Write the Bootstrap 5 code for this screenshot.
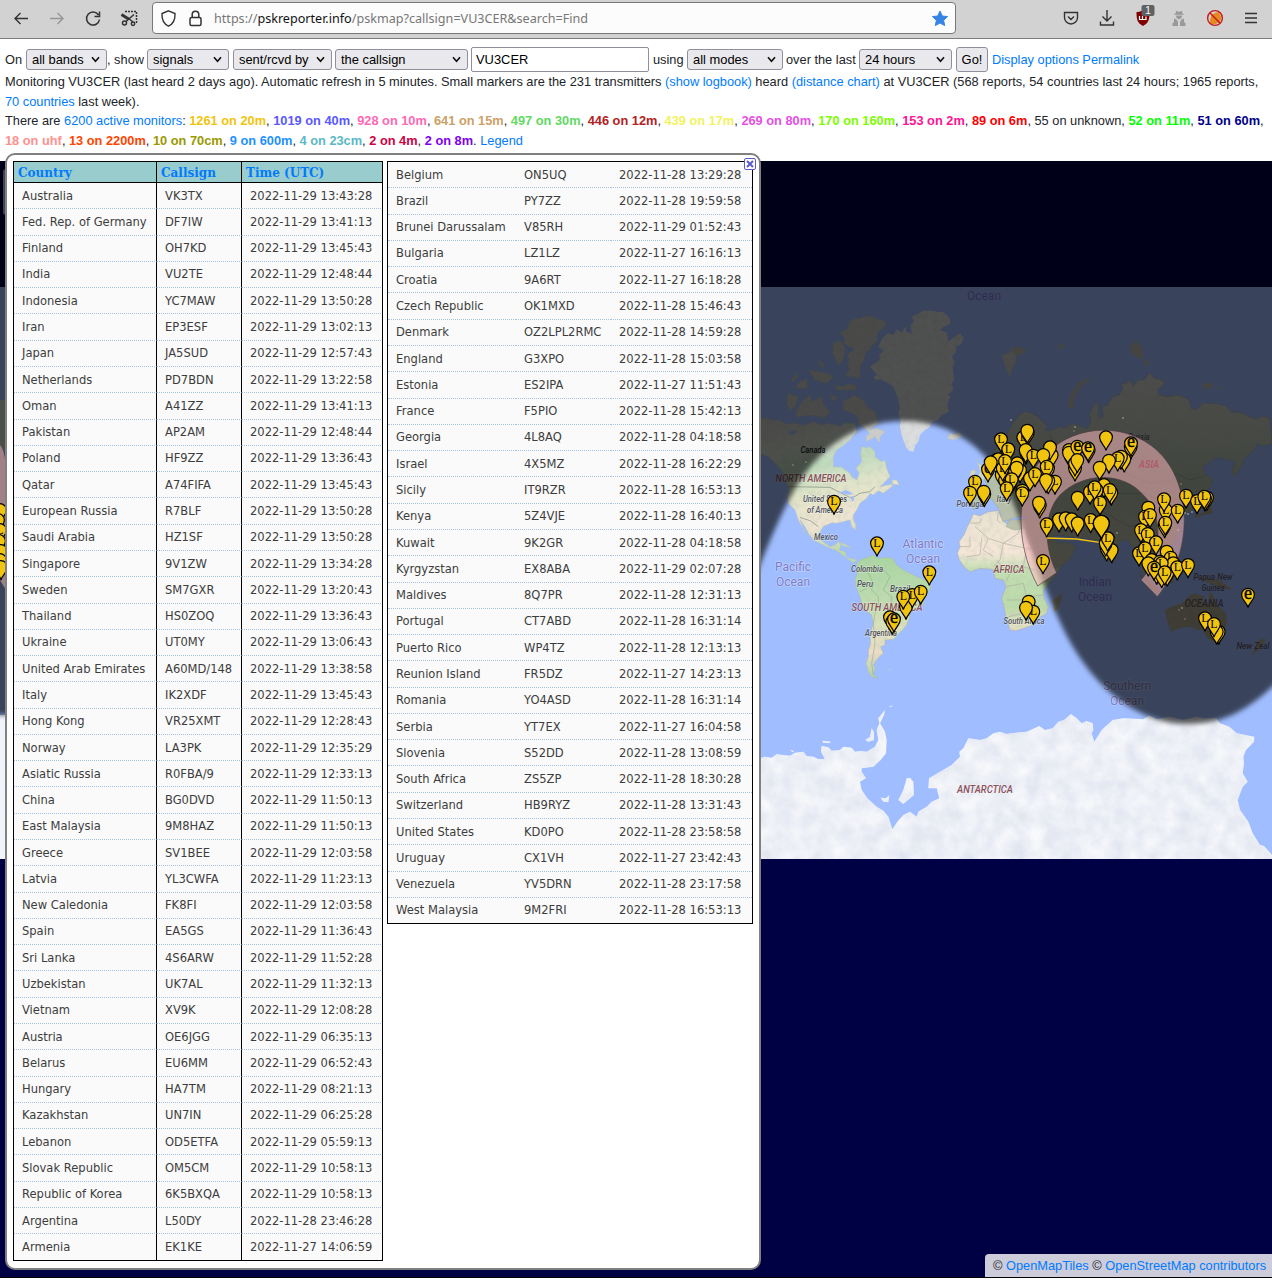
<!DOCTYPE html>
<html lang="en">
<head>
<meta charset="utf-8">
<meta name="viewport" content="width=device-width, initial-scale=1">
<title>PSK Reporter - Display Reception Reports</title>
<link rel="stylesheet" href="https://cdn.jsdelivr.net/npm/bootstrap@5.3.0/dist/css/bootstrap.min.css">
<style>
body{font-family:"Liberation Sans",Arial,sans-serif;font-size:12.8px;line-height:19.5px;color:#212529;background:#fff;overflow:hidden}
a{color:#007bff;text-decoration:none}
.browser-bar{height:39px;background:#d2d2d2;border-bottom:1px solid #7c7c7c;padding:0 12px 2px 12px}
.tool-icon{width:18px;height:18px;flex:none}
.gap-tool{margin-left:18px}
.gap-inner{margin-left:9px}
.gap-field{margin-left:4px}
.address{width:804px;height:32px;background:#fcfcfc;border:1px solid #777;border-radius:4px;padding:1px 7px 0;font-family:"Noto Sans",sans-serif;font-size:12.6px;color:#777;margin-left:14px}
.address b{font-weight:400;color:#111}
.filters{height:33px;padding:8px 5px 0;white-space:pre}
.filters .form-select{font-size:12.9px;line-height:15px;height:21px;padding:0 18px 0 5px;border:1px solid #8f8f9d;border-radius:3px;color:#000;background-color:#e9e9ed;background-image:url("data:image/svg+xml,%3Csvg xmlns='http://www.w3.org/2000/svg' viewBox='0 0 10 10'%3E%3Cpath d='M1.800 3 5 6.600 8.200 3' fill='none' stroke='%23111' stroke-width='1.500'/%3E%3C/svg%3E");background-size:11px;background-position:right 5px center;flex:none}
.filters .form-control{width:178px;height:25px;font-size:12.9px;padding:0 4px;border:1px solid #8f8f9d;border-radius:2px;color:#000;flex:none}
.go-btn{font-size:12.9px;line-height:15px;width:32px;height:25px;padding:0;border:1px solid #8f8f9d;border-radius:3px;background:#e9e9ed;color:#000}
.w-bands{width:81px}.w-sig{width:82px}.w-dir{width:99px}.w-call{width:133px}.w-mode{width:96px}.w-hour{width:93px}
.t-on{width:21px}.t-show{width:40px}.t-using{width:38px;padding-left:4px}.t-over{width:76px;padding-left:3px}
.status{height:89px;padding-left:5px;white-space:nowrap}
.map-area{height:1117px;background:#000045;position:relative;overflow:hidden;border-bottom:1px solid #000}
.map-area>svg{display:block}
.popup-panel{position:absolute;left:5px;top:153px;width:756px;height:1117px;background:#fff;border:2px solid #808080;border-radius:10px;padding:6px 6px 0;gap:4px}
.report{border:1px solid #000;background:#fafafa;font-family:"DejaVu Sans",sans-serif;font-size:11.52px;line-height:16px;color:#3d3d3d;display:block;overflow:hidden}
.report tbody,.report thead{display:block}
.report tr{display:flex;height:26.29px}
.report td{padding:4.6px 0 0 8px;border-bottom:1px dotted #a4c3e4;flex:none}
.report tr:last-child td{border-bottom:0}
.report th{padding:3px 0 0 4px;color:#007bff;font:bold 12px/17px "DejaVu Serif",serif;flex:none}
.report thead tr{height:21px;background:#9cc;border-bottom:1px solid #000}
.rep-a{width:370px;height:1100px}.rep-b{width:366px;height:763px}
.rep-a tr>:nth-child(1){width:143px;border-right:1px solid #000}
.rep-a tr>:nth-child(2){width:85px;border-right:1px solid #000}
.rep-a tr>:nth-child(3){width:141px}
.rep-b tr>:nth-child(1){width:128px}.rep-b tr>:nth-child(2){width:95px}.rep-b tr>:nth-child(3){width:141px}
.close-x{position:absolute;right:3px;top:3px;width:12px;height:12px}
.attrib{position:absolute;right:0;bottom:0;width:287px;height:23px;background:#ccccda;border-radius:4px 0 0 0;padding:2px 0 0 8px;white-space:nowrap;font-size:12.8px}
.map-word{font-family:Roboto,sans-serif;font-style:italic;font-weight:500;font-size:9.5px;fill:#50535c;text-anchor:middle;stroke:#fff;stroke-opacity:.35;stroke-width:1.4px;paint-order:stroke}
.map-land{fill:#8a505a;font-size:11px}
.map-sea{fill:#7d7cc6;font-style:normal;font-size:12px;font-weight:400}
.map-dim{stroke:none;fill:#241f26}.map-dimsea{stroke:none;fill:#302b50}
.map-asia{stroke:none;fill:#b05868}
.pin-letter{font-family:"Liberation Serif",serif;font-size:12px;text-anchor:middle;fill:#000}
.pin-big{font-size:18px;stroke:#000;stroke-width:.4px}
</style>
</head>
<body>
<nav class="browser-bar d-flex align-items-center">
  <svg class="tool-icon" viewBox="0 0 18 18" fill="none" stroke="#333" stroke-width="1.4"><path d="M16 9.500H3M8.500 4 3 9.500 8.500 15"/></svg>
  <svg class="tool-icon gap-tool" viewBox="0 0 18 18" fill="none" stroke="#969696" stroke-width="1.400"><path d="M2 9.500h13M9.500 4 15 9.500 9.500 15"/></svg>
  <svg class="tool-icon gap-tool" viewBox="0 0 18 18" fill="none" stroke="#333" stroke-width="1.500"><path d="M14.500 6A6.500 6.500 0 1 0 15.500 10.500M15.500 2.500v5h-5"/></svg>
  <svg class="tool-icon gap-tool" viewBox="0 0 18 18" fill="none" stroke="#333" stroke-width="1.500"><path stroke-dasharray="2 1" d="M5 2.500h11.500V15"/><path d="m8 9 5 4M14 5.500 6 12.500"/><circle cx="4.500" cy="14" r="2"/><circle cx="13" cy="14.800" r="1.700"/><path stroke-width="3" d="m1.500 5.500 7 4.500"/></svg>
  <div class="address d-flex align-items-center">
    <svg class="tool-icon" viewBox="0 0 18 18" fill="none" stroke="#333" stroke-width="1.400"><path d="M8.500.8 15 3.500c.3 6-2 10.500-6.500 12.700C4 14 1.700 9.500 2 3.500z"/></svg>
    <svg class="tool-icon gap-inner" viewBox="0 0 18 18" fill="none" stroke="#333" stroke-width="1.500"><rect x="3" y="7.500" width="11" height="8" rx="1.500"/><path d="M5.200 7.500v-3a3.300 3.300 0 0 1 6.600 0v3"/></svg>
    <span class="flex-grow-1 gap-inner">https://<b>pskreporter.info</b>/pskmap?callsign=VU3CER&amp;search=Find</span>
    <svg class="tool-icon" viewBox="0 0 18 18" fill="#3584e4"><path stroke="#3584e4" stroke-linejoin="round" d="m10 1 2.300 5 5.300.6-4 3.700 1.100 5.300L10 13l-4.700 2.600 1.100-5.300-4-3.700 5.300-.6z"/></svg>
  </div>
  <div class="d-flex ms-auto gap-3 pe-0" style="column-gap:18px!important">
    <svg class="tool-icon" viewBox="0 0 18 18" fill="none" stroke="#333" stroke-width="1.400"><path d="M2.500 3.500h13v5a6.500 6.500 0 0 1-13 0zM6 7.500l3 3 3-3"/></svg>
    <svg class="tool-icon" viewBox="0 0 18 18" fill="none" stroke="#333" stroke-width="1.400"><path d="M9 1v11M4.500 7.500 9 12l4.500-4.500M2.500 12.500v3.500h13v-3.500"/></svg>
    <svg class="tool-icon overflow-visible" viewBox="0 0 18 18"><path fill="#800000" d="M9 1c2 1.500 4 2 6.500 2 0 8-1 11-6.500 14C3.500 14 2.500 11 2.500 3 5 3 7 2.500 9 1z"/><path d="M5.500 7v3.500h3V7v3.500H12V7.500" fill="none" stroke="#fff" stroke-width="1.200"/><rect x="7.500" y="-4" width="13" height="11" rx="2" fill="#5f6165"/><text x="14" y="5" font-size="10" fill="#fff" text-anchor="middle">1</text></svg>
    <svg class="tool-icon" viewBox="0 0 18 18" fill="#999"><path d="M5.500 4.500 6 2l3 .7L12 2l.5 2.500 2 1.200H3.500zM6 6.500h6L11.500 9 9 10.500 6.500 9zM4 9.500l2.500 1L8 13v4H2.500v-3l1.500-.7zM14 9.500l-2.500 1L10 13v4h5.500v-3l-1.500-.7z"/></svg>
    <svg class="tool-icon" viewBox="0 0 18 18"><path fill="#e58a1f" d="M4 14c0-7 2-10 9-11l2 5c1 4-4 8-9 7z"/><circle cx="9" cy="9" r="7.400" fill="none" stroke="#c81919" stroke-width="1.400"/><path d="m4 4 10 10" stroke="#c81919" stroke-width="1.500"/></svg>
    <svg class="tool-icon" viewBox="0 0 18 18" stroke="#333" stroke-width="1.300"><path d="M3 4.500h12M3 9h12M3 13.500h12"/></svg>
  </div>
</nav>
<form class="filters d-flex align-items-center">
<span class="t-on">On</span><select class="form-select w-bands"><option>all bands</option></select><span class="t-show">, show</span><select class="form-select w-sig"><option>signals</option></select><select class="form-select w-dir gap-field"><option>sent/rcvd by</option></select><select class="form-select w-call" style="margin-left:3px"><option>the callsign</option></select><input class="form-control" style="margin-left:3px" value="VU3CER"><span class="t-using">using</span><select class="form-select w-mode"><option>all modes</option></select><span class="t-over">over the last</span><select class="form-select w-hour"><option>24 hours</option></select><button type="button" class="btn go-btn gap-field">Go!</button><span class="gap-field"><a href="#">Display options</a> <a href="#">Permalink</a></span>
</form>
<div class="status">
<div>Monitoring VU3CER (last heard 2 days ago). Automatic refresh in 5 minutes. Small markers are the 231 transmitters <a href="#">(show logbook)</a> heard <a href="#">(distance chart)</a> at VU3CER (568 reports, 54 countries last 24 hours; 1965 reports,</div>
<div><a href="#">70 countries</a> last week).</div>
<div>There are <a href="#">6200 active monitors</a>: <b style="color:#f1c40f">1261 on 20m</b>, <b style="color:#5959ff">1019 on 40m</b>, <b style="color:#ff69b4">928 on 10m</b>, <b style="color:#cca166">641 on 15m</b>, <b style="color:#62d962">497 on 30m</b>, <b style="color:#b22222">446 on 12m</b>, <b style="color:#f2f261">439 on 17m</b>, <b style="color:#e550e5">269 on 80m</b>, <b style="color:#7cfc00">170 on 160m</b>, <b style="color:#ff1493">153 on 2m</b>, <b style="color:#f00">89 on 6m</b>, 55 on unknown, <b style="color:#0f0">52 on 11m</b>, <b style="color:#00008b">51 on 60m</b>,</div>
<div><b style="color:#ff9090">18 on uhf</b>, <b style="color:#ff4500">13 on 2200m</b>, <b style="color:#999900">10 on 70cm</b>, <b style="color:#1e90ff">9 on 600m</b>, <b style="color:#5ab8c7">4 on 23cm</b>, <b style="color:#cc0044">2 on 4m</b>, <b style="color:#7f00f1">2 on 8m</b>. <a href="#">Legend</a></div>
</div>
<main class="map-area">
<svg width="1272" height="1117" viewBox="0 161 1272 1117">
<defs>
<filter id="soft" x="-5%" y="-5%" width="110%" height="110%"><feGaussianBlur stdDeviation="2.600"/></filter>
<filter id="terrain" x="0" y="0" width="100%" height="100%"><feTurbulence type="fractalNoise" baseFrequency=".06" numOctaves="4" seed="8" result="n"/><feColorMatrix in="n" values="0 0 0 0 .5  0 0 0 0 .55  0 0 0 0 .48  .8 0 0 0 -.32" result="c"/><feComposite in="c" in2="SourceGraphic" operator="in" result="t"/><feMerge><feMergeNode in="SourceGraphic"/><feMergeNode in="t"/></feMerge></filter>
<filter id="ice" x="0" y="0" width="100%" height="100%" color-interpolation-filters="sRGB"><feTurbulence type="fractalNoise" baseFrequency=".02" numOctaves="4" seed="3" result="n"/><feColorMatrix in="n" values="0 0 0 0 .86  0 0 0 0 .88  0 0 0 0 .93  1.200 0 0 0 -.2" result="c"/><feComposite in="c" in2="SourceGraphic" operator="in" result="t"/><feMerge><feMergeNode in="SourceGraphic"/><feMergeNode in="t"/></feMerge></filter>
<linearGradient id="north" x2=".25" y2="1"><stop offset="0" stop-color="#c8c8c3"/><stop offset=".25" stop-color="#d8ddd3"/><stop offset=".4" stop-color="#bedbbc"/><stop offset=".6" stop-color="#e3e5ca"/><stop offset=".8" stop-color="#efe4d2"/><stop offset="1" stop-color="#bcdcad"/></linearGradient>
<linearGradient id="south" x2="0" y2="1"><stop offset="0" stop-color="#a8d6a0"/><stop offset=".35" stop-color="#bcdcae"/><stop offset=".6" stop-color="#dee2bd"/><stop offset=".8" stop-color="#ecdcc8"/><stop offset="1" stop-color="#add4a4"/></linearGradient>
<linearGradient id="sahara" x2="0" y2="1"><stop offset="0" stop-color="#e9e3d1"/><stop offset=".35" stop-color="#f5e6d8"/><stop offset=".5" stop-color="#c1deb0"/><stop offset=".8" stop-color="#bcdba9"/><stop offset="1" stop-color="#e9dfc4"/></linearGradient>
<linearGradient id="asia" x2="0" y2="1"><stop offset="0" stop-color="#d6d6cf"/><stop offset=".3" stop-color="#c3cbbf"/><stop offset=".55" stop-color="#b0bea9"/><stop offset="1" stop-color="#c6c3ac"/></linearGradient>
<path id="pin" d="M0 13C-1.300 7.500-6.400 5.500-6.400 0a6.400 6.400 0 0 1 12.800 0C6.400 5.500 1.300 7.500 0 13z" fill="#f1c40f" stroke="#000" stroke-width="1.200"/>
</defs>
<rect y="287" width="1272" height="572" fill="#9fbdff"/>
<g transform="translate(760 280) scale(.33333)" filter="url(#terrain)" stroke="#b4c2b8" stroke-width="1.500" stroke-linejoin="round">
<path fill="#dcdddf" stroke="none" d="M330 260 345 250 360 240 358 225 372 212 355 200 368 175 385 160 400 165 410 148 425 158 435 140 440 155 455 160 452 135 462 122 455 110 480 98 490 92 520 92 535 97 548 95 560 105 570 118 570 132 550 140 540 150 560 158 565 185 585 170 600 160 611 175 603 192 588 200 588 215 575 230 584 245 578 260 582 300 575 310 580 330 563 345 572 350 562 370 566 395 545 405 535 420 515 425 510 440 495 450 480 465 475 485 466 495 460 515 448 512 440 505 432 485 425 465 420 440 422 420 415 400 420 385 413 350 400 320 385 310 370 302 360 298 345 300 340 290 352 285z"/>
<path fill="#ccccca" d="M240 160 262 145 270 125 285 115 300 117 315 108 340 110 350 118 370 120 378 130 370 145 355 155 350 170 352 185 335 195 330 210 318 215 312 240 300 260 300 295 280 290 260 290 258 278 270 270 262 255 268 240 262 225 285 205 268 200 250 190 255 175zM220 190 240 180 255 205 250 240 235 255 218 220zM92 300 115 277 112 292 97 306zM120 305 140 297 142 325 105 325zM145 270 200 280 220 290 200 310 165 300zM173 238 195 255 185 262zM223 315 250 320 262 312 285 315 290 330 230 330zM85 340 115 350 105 380 90 390 80 370zM125 365 150 345 155 365 185 350 190 375 210 395 190 415 160 405 110 410 108 395zM208 350 230 345 225 365zM250 355 260 362 280 345 310 360 320 380 345 395 350 410 355 430 325 450 350 445 375 455 360 470 360 490 345 470 320 485 318 470 330 460 310 440 295 430 295 415 280 400 250 390zM570 460 583 463 600 456 605 470 580 480 562 475zM725 225 740 222 768 205 768 245 758 260 750 290 738 265z"/>
<path fill="url(#north)" d="M0 415 20 413 35 422 60 420 75 432 110 430 130 437 160 425 185 436 200 430 230 435 240 440 250 430 285 430 290 455 270 480 245 500 230 510 220 530 220 560 245 562 270 580 275 590 290 600 298 580 288 565 305 545 302 520 305 500 320 503 330 500 345 515 345 530 365 545 375 540 380 565 390 590 375 605 360 620 395 612 398 618 370 640 355 632 340 645 330 640 320 655 300 670 295 680 290 690 280 705 280 720 288 735 286 750 275 740 270 720 250 725 230 730 215 728 190 740 180 755 182 780 195 790 210 800 225 795 235 785 243 795 238 810 255 815 260 832 270 835 292 840 280 848 255 830 230 812 200 800 180 790 160 780 145 760 135 740 120 720 130 750 142 765 125 740 115 720 105 690 85 670 82 650 88 630 85 620 75 590 65 570 45 550 25 530 0 520zM235 785 260 795 275 805 250 798zM395 600 410 600 418 615 398 612z"/>
<path fill="none" stroke="#77877a" stroke-width="2" d="M85 620 210 622 245 640 275 655 300 640 330 635 345 620M120 712 150 722 175 740"/>
<path fill="#9fbdff" stroke="none" d="M235 638 258 630 278 640 268 645zM272 650 280 647 283 660 276 665zM85 455 110 450 108 460 90 465zM130 510 145 500 143 512z"/>
<path fill="#cfd8c5" d="M650 535 655 550 665 555 675 600 650 595 660 575zM632 572 647 570 645 588 628 596z"/>
</g>
<g transform="translate(760 560) scale(.33333)" filter="url(#terrain)" stroke="#a7b8a3" stroke-width="1.500" stroke-linejoin="round">
<path fill="url(#south)" d="M290 10 310-5 325-8 340-15 355-5 385-8 400-3 410 15 430 30 455 42 470 50 495 60 510 70 512 85 500 100 490 115 490 135 470 145 450 155 448 175 440 195 425 212 412 225 400 238 375 240 375 255 362 260 370 280 358 290 350 300 340 315 345 325 340 345 355 355 335 350 325 335 318 310 325 290 325 270 332 250 330 225 340 190 335 165 310 145 300 110 290 85 285 60 292 40z"/>
<path fill="none" stroke="#899b84" d="M300 20 325 40 340 70 335 90 355 110 355 130 345 160 340 190 345 250 335 310 340 345M350 20 370 30 390 50 370 90 395 110 395 135 385 170 410 200M300 95 320 85"/>
<path fill="#b9d6bb" stroke="none" d="M384 328 396 327 390 331z"/>
</g>
<g transform="translate(960 400) scale(.33333)" filter="url(#terrain)" stroke="#aaa99b" stroke-width="1.500" stroke-linejoin="round">
<path fill="url(#sahara)" d="M40 342 60 348 85 335 115 332 122 350 135 368 160 378 175 370 205 378 215 395 232 430 250 460 258 480 270 495 305 480 303 500 290 520 270 545 250 570 252 595 265 620 260 640 235 655 220 675 190 685 168 692 150 690 138 650 132 620 125 595 138 560 130 540 105 535 100 508 60 505 30 515 12 500-2 480-8 460 0 440-3 425 12 405 20 385 30 365z"/>
<path fill="none" stroke="#a09c90" d="M30 370 60 368 65 355M45 380 85 415 130 430 175 400 180 378M65 415 60 465 20 470M0 440 30 440 30 410M85 415 70 450 100 470M130 430 120 480 100 500M130 430 200 445 245 450M200 445 190 500 150 520 138 545M185 500 230 510 240 550 290 520M140 560 190 550 200 590 250 585M140 600 190 600 190 640 145 650M190 600 240 620M115 335 112 360 122 370M110 480 135 510"/>
</g>
<g transform="translate(1016 280) scale(.33333)" filter="url(#terrain)" stroke="#9aa49a" stroke-width="1.500" stroke-linejoin="round">
<path fill="url(#asia)" d="M-128 690-135 655-125 635-80 632-95 597-75 585-60 565-30 550-50 565-68 545-65 510-55 495-40 490-25 460-10 430 10 405 25 395 45 398 65 410 95 440 85 452 110 450 130 440 145 445 170 430 190 437 215 445 225 425 220 400 240 365 248 380 246 400 250 415 262 410 258 380 275 375 290 350 310 345 320 325 315 312 330 310 345 300 350 320 365 300 385 300 400 278 415 295 440 300 445 312 425 330 430 345 455 350 490 345 520 360 525 385 540 390 560 370 600 370 630 378 645 395 680 400 700 410 720 418 740 408 762 415 768 490 740 500 725 490 715 510 690 530 675 560 655 590 648 570 658 545 640 540 600 532 585 545 560 560 565 580 590 600 580 625 560 640 540 635 520 640 530 665 530 690 510 700 500 680 480 690 490 720 485 750 470 790 450 805 430 810 400 830 415 850 410 870 380 880 370 840 350 800 335 780 320 780 300 800 290 850 275 830 265 795 240 780 215 775 160 770 130 765 100 770 130 790 150 785 180 800 160 840 130 860 80 870 60 830 40 790 30 760 30 745-5 750-30 740-20 720 30 718 40 705 0 712-40 725-50 690-75 655-105 660z"/>
<path fill="none" stroke="#7f897e" d="M100 460 115 500 90 560 100 620 180 610 230 590 300 600 330 580 400 610 470 600 480 580 520 600 560 590M230 680 300 640 390 640 440 670 420 720 340 740 270 700z"/>
<path fill="#bdbdb5" stroke="none" d="M155 380 165 340 190 305 228 290 195 320 175 350 170 390zM342 200 360 180 380 210 378 240 350 225zM385 235 403 250 385 260zM125 195 148 195 136 210zM-20 205 15 200 32 215 5 228zM560 310 590 310 585 327 562 325zM603 322 620 325 610 330z"/>
<path fill="#aaa48a" stroke="none" d="M447 990 470 978 500 970 515 950 535 940 565 950 560 965 575 970 582 935 590 945 600 970 615 985 630 1000 632 1030 620 1060 595 1085 575 1075 560 1050 545 1050 520 1040 490 1045 465 1055 455 1030zM730 1080 750 1075 735 1105 705 1127zM370 880 400 900 430 930 425 942 395 920zM110 960 140 940 125 990 115 995zM540 890 570 895 610 900 650 930 620 925 590 915zM590 700 560 705 540 715 535 705 570 695 585 675zM440 880 475 870 470 910 445 910z"/>
</g>
<g transform="translate(760 560) scale(.33333)" filter="url(#ice)">
<path fill="#f8f9fc" d="M0 595 15 590 35 593 50 583 90 587 105 578 130 575 140 588 160 590 175 597 195 598 183 575 185 558 205 562 215 572 240 570 250 560 275 563 285 575 300 573 320 575 345 560 355 540 350 510 358 490 355 475 375 450 372 465 360 490 375 515 380 540 378 580 362 600 340 620 305 625 305 635 318 655 300 665 305 690 322 715 350 740 370 752 385 770 397 808 412 785 430 765 450 755 470 770 475 755 500 740 515 725 538 715 530 685 505 685 507 655 540 635 575 615 600 590 598 575 610 565 625 535 660 540 680 535 700 520 720 515 740 522 768 518 800 515 838 498 855 510 878 505 895 485 912 480 933 462 950 475 965 490 980 483 998 490 1000 510 995 520 1003 545 1025 510 1058 480 1090 475 1150 478 1168 467 1190 478 1230 470 1270 480 1310 470 1330 475 1368 475 1380 490 1408 500 1430 520 1483 530 1482 545 1458 570 1450 590 1452 610 1448 640 1463 665 1448 680 1433 720 1440 750 1465 785 1478 820 1500 855 1512 858 1536 885V897H0zM415 720 430 690 440 655 450 653 460 665 462 705 450 715 430 732zM362 713 378 715 388 705 385 727 370 725zM316 540 330 530 335 505 342 515 342 540 325 545zM187 542 212 545 210 549 190 548zM90 570 102 573 98 577zM387 440 398 436 392 442z"/>
</g>
<path fill="#f1f4fa" d="M0 715H6V859H0z"/>
<g>
<text class="map-word map-dim" x="813" y="453" textLength="25" lengthAdjust="spacingAndGlyphs">Canada</text>
<text class="map-word map-land" x="811" y="482" textLength="71" lengthAdjust="spacingAndGlyphs">NORTH AMERICA</text>
<text class="map-word" x="825" y="502" textLength="44" lengthAdjust="spacingAndGlyphs">United States</text><text class="map-word" x="825" y="513" textLength="36" lengthAdjust="spacingAndGlyphs">of America</text>
<text class="map-word" x="826" y="540" textLength="24" lengthAdjust="spacingAndGlyphs">Mexico</text><text class="map-word" x="867" y="572" textLength="32" lengthAdjust="spacingAndGlyphs">Colombia</text>
<text class="map-word" x="865" y="587" textLength="16" lengthAdjust="spacingAndGlyphs">Peru</text><text class="map-word" x="900" y="592" textLength="20" lengthAdjust="spacingAndGlyphs">Brazil</text><text class="map-word" x="881" y="636" textLength="32" lengthAdjust="spacingAndGlyphs">Argentina</text>
<text class="map-word map-land" x="887" y="611" textLength="71" lengthAdjust="spacingAndGlyphs">SOUTH AMERICA</text><text class="map-word map-land" x="1009" y="573" textLength="31" lengthAdjust="spacingAndGlyphs">AFRICA</text>
<text class="map-word" x="971" y="507" textLength="29" lengthAdjust="spacingAndGlyphs">Portugal</text><text class="map-word" x="1004" y="502" textLength="15" lengthAdjust="spacingAndGlyphs">Italy</text><text class="map-word" x="1024" y="624" textLength="41" lengthAdjust="spacingAndGlyphs">South Africa</text>
<text class="map-word map-sea" x="793" y="571">Pacific</text><text class="map-word map-sea" x="793" y="586">Ocean</text><text class="map-word map-sea" x="923" y="548">Atlantic</text><text class="map-word map-sea" x="923" y="563">Ocean</text>
<text class="map-word map-sea" x="1127" y="690">Southern</text><text class="map-word map-sea" x="1127" y="705">Ocean</text>
<text class="map-word map-land" x="985" y="793" textLength="56" lengthAdjust="spacingAndGlyphs">ANTARCTICA</text>
</g>
<path filter="url(#soft)" fill="#000" fill-opacity=".64" d="M-40 100H1320V650L1272 687C1245 712 1220 724 1188 724 1135 724 1088 684 1060 622 1035 570 1022 515 1000 475 975 438 942 421 903 421 850 421 815 455 796 487 780 515 768 545 758 570L700 715H-40z"/>
<g>
<text class="map-word map-sea map-dimsea" x="984" y="300">Ocean</text><text class="map-word map-sea map-dimsea" x="1095" y="586">Indian</text><text class="map-word map-sea map-dimsea" x="1095" y="601">Ocean</text>
<text class="map-word map-dim" x="1139" y="440" textLength="21" lengthAdjust="spacingAndGlyphs">Russia</text><text class="map-word map-dim" x="1213" y="580" textLength="39" lengthAdjust="spacingAndGlyphs">Papua New</text><text class="map-word map-dim" x="1213" y="591" textLength="23" lengthAdjust="spacingAndGlyphs">Guinea</text><text class="map-word map-dim" x="1253" y="649" textLength="33" lengthAdjust="spacingAndGlyphs">New Zeal</text>
<text class="map-word map-land map-dim" x="1204" y="607" textLength="39" lengthAdjust="spacingAndGlyphs">OCEANIA</text>
</g>
<g fill="#c9cdbb" fill-opacity=".55"><circle cx="1011" cy="420" r=".9"/><circle cx="1075" cy="427" r=".9"/><circle cx="1074" cy="431" r=".7"/><circle cx="1123" cy="418" r=".9"/><circle cx="1181" cy="484" r=".8"/><circle cx="1185" cy="513" r="1.200"/><circle cx="1188" cy="514" r="1"/><circle cx="1192" cy="512" r="1"/><circle cx="1182" cy="608" r=".9"/><circle cx="1179" cy="610" r=".7"/><circle cx="1185" cy="619" r=".7"/><circle cx="1178" cy="530" r=".9"/><circle cx="793" cy="465" r=".8"/><circle cx="806" cy="462" r=".8"/><circle cx="1100" cy="537" r="1"/><circle cx="1117" cy="533" r=".9"/></g>
<g transform="translate(960 400) scale(.33333)"><path fill="#ffbdc0" fill-opacity=".53" stroke="#4c3c42" stroke-width="2" d="M233 558C165 430 160 260 260 160 350 70 500 68 590 150 700 250 700 460 592 590L543 540C610 470 610 340 550 285 490 215 370 215 300 285 245 345 255 450 290 518z"/><path fill="none" stroke="#f1c40f" stroke-width="4" d="M260 414 350 417 424 428"/></g>
<text class="map-word map-land map-asia" x="1149" y="468" textLength="20" lengthAdjust="spacingAndGlyphs">ASIA</text>
<path fill="#4b4f49" d="M0 400H6V455L0 445z"/>
<path fill="#a28186" d="M0 445Q6 452 6 475V590L0 580z"/>
<rect x="3" y="169" width="6" height="46" rx="3" fill="#44444f"/>
<g id="pins"></g>
</svg>
<div class="attrib">© <a href="#">OpenMapTiles</a> © <a href="#">OpenStreetMap contributors</a></div>
</main>
<section class="popup-panel d-flex align-items-start">
<table class="report rep-a"><thead><tr><th>Country</th><th>Callsign</th><th>Time (UTC)</th></tr></thead><tbody id="first"></tbody></table>
<table class="report rep-b"><tbody id="second"></tbody></table>
<svg class="close-x" viewBox="0 0 12 12"><rect x=".5" y=".5" width="11" height="11" rx="1.500" fill="#fff" stroke="#5a5acb"/><path d="m3 3 6 6M9 3 3 9" stroke="#5a5acb" stroke-width="2"/></svg>
</section>
<script>
// Latest contact per country: name|callsign|day and time
const firstRows=`Australia|VK3TX|29 13:43:28
Fed. Rep. of Germany|DF7IW|29 13:41:13
Finland|OH7KD|29 13:45:43
India|VU2TE|29 12:48:44
Indonesia|YC7MAW|29 13:50:28
Iran|EP3ESF|29 13:02:13
Japan|JA5SUD|29 12:57:43
Netherlands|PD7BDN|29 13:22:58
Oman|A41ZZ|29 13:41:13
Pakistan|AP2AM|29 12:48:44
Poland|HF9ZZ|29 13:36:43
Qatar|A74FIFA|29 13:45:43
European Russia|R7BLF|29 13:50:28
Saudi Arabia|HZ1SF|29 13:50:28
Singapore|9V1ZW|29 13:34:28
Sweden|SM7GXR|29 13:20:43
Thailand|HS0ZOQ|29 13:36:43
Ukraine|UT0MY|29 13:06:43
United Arab Emirates|A60MD/148|29 13:38:58
Italy|IK2XDF|29 13:45:43
Hong Kong|VR25XMT|29 12:28:43
Norway|LA3PK|29 12:35:29
Asiatic Russia|R0FBA/9|29 12:33:13
China|BG0DVD|29 11:50:13
East Malaysia|9M8HAZ|29 11:50:13
Greece|SV1BEE|29 12:03:58
Latvia|YL3CWFA|29 11:23:13
New Caledonia|FK8FI|29 12:03:58
Spain|EA5GS|29 11:36:43
Sri Lanka|4S6ARW|29 11:52:28
Uzbekistan|UK7AL|29 11:32:13
Vietnam|XV9K|29 12:08:28
Austria|OE6JGG|29 06:35:13
Belarus|EU6MM|29 06:52:43
Hungary|HA7TM|29 08:21:13
Kazakhstan|UN7IN|29 06:25:28
Lebanon|OD5ETFA|29 05:59:13
Slovak Republic|OM5CM|29 10:58:13
Republic of Korea|6K5BXQA|29 10:58:13
Argentina|L50DY|28 23:46:28
Armenia|EK1KE|27 14:06:59`;
const secondRows=`Belgium|ON5UQ|28 13:29:28
Brazil|PY7ZZ|28 19:59:58
Brunei Darussalam|V85RH|29 01:52:43
Bulgaria|LZ1LZ|27 16:16:13
Croatia|9A6RT|27 16:18:28
Czech Republic|OK1MXD|28 15:46:43
Denmark|OZ2LPL2RMC|28 14:59:28
England|G3XPO|28 15:03:58
Estonia|ES2IPA|27 11:51:43
France|F5PIO|28 15:42:13
Georgia|4L8AQ|28 04:18:58
Israel|4X5MZ|28 16:22:29
Sicily|IT9RZR|28 16:53:13
Kenya|5Z4VJE|28 16:40:13
Kuwait|9K2GR|28 04:18:58
Kyrgyzstan|EX8ABA|29 02:07:28
Maldives|8Q7PR|28 12:31:13
Portugal|CT7ABD|28 16:31:14
Puerto Rico|WP4TZ|28 12:13:13
Reunion Island|FR5DZ|27 14:23:13
Romania|YO4ASD|28 16:31:14
Serbia|YT7EX|27 16:04:58
Slovenia|S52DD|28 13:08:59
South Africa|ZS5ZP|28 18:30:28
Switzerland|HB9RYZ|28 13:31:43
United States|KD0PO|28 23:58:58
Uruguay|CX1VH|27 23:42:43
Venezuela|YV5DRN|28 23:17:58
West Malaysia|9M2FRI|28 16:53:13`;
const fill=(id,rows)=>document.getElementById(id).innerHTML=rows.split("\n").map(r=>{const [a,b,c]=r.split("|");return `<tr><td>${a}</td><td>${b}</td><td>2022-11-${c}</td></tr>`}).join("");
fill("first",firstRows);fill("second",secondRows);
// Transmitters: letter (P = plain pin, B = monitored station), x, y of the pin's head in the Eurasia inset grid
const pins=`L123,118 L145,148 L190,112 P203,98 P202,92 P198,155 P197,150 L220,167 P110,180 P120,200 P150,205 P125,225 P155,225 P135,240 P150,250 P180,210 e84,208 P172,190 P275,165 P270,142 P250,165 P264,205 L260,200 P210,235 L225,222 L285,245 P265,243 P258,240 P115,178 P92,187 L128,205 L135,183 P165,215 P170,203 L155,238 L140,265 P187,272 L187,280 L45,245 L30,278 P73,282 P71,275 P239,316 P237,308 P327,150 P345,205 P332,168 P327,158 e352,140 P386,150 e384,145 P345,190 P352,180 P438,112 P512,140 e513,130 P493,178 P483,170 L473,175 P447,182 P419,203 P353,293 P432,255 L390,275 P410,270 L404,262 P454,278 L449,270 L420,308 L260,373 P297,358 P317,355 P335,358 P353,370 L392,360 P440,445 P455,450 P437,430 L443,415 B424,370 L249,483 L617,330 L612,298 P565,323 L555,350 L570,345 L653,332 L678,287 L711,303 P741,293 P735,296 L733,290 P614,375 L616,368 L543,390 L563,402 L588,427 L537,460 L555,445 P575,480 P620,455 P600,485 P565,490 L632,473 P640,490 L605,490 P590,515 P605,525 P622,520 e582,503 L614,517 L652,502 L684,495 P206,605 L220,635 P198,623 e864,584 P776,695 L735,655 P770,695 L762,672 L-92,517 P-162,620 L-143,585 L-118,575 L-170,590 P-210,652 P-203,665 e-198,658 L-249,430 L-378,305`.split(" ");
const edge=[["P",0,510],["P",-2,520],["L",0,530],["P",-1,541],["P",1,551],["L",0,560],["P",1,567]];
const draw=(k,x,y)=>`<g transform="translate(${x.toFixed(1)} ${y.toFixed(1)})${k=="B"?" scale(1.25)":""}"><use href="#pin"/>${k=="L"||k=="e"?`<text class="pin-letter ${k=="e"?"pin-big":""}" y="${k=="e"?4:3.5}">${k}</text>`:""}</g>`;
document.getElementById("pins").innerHTML=pins.map(p=>{const [x,y]=p.slice(1).split(",").map(Number);return draw(p[0],960+x/3,400+y/3)}).join("")+edge.map(e=>draw(...e)).join("");
</script>
<script src="https://cdn.jsdelivr.net/npm/bootstrap@5.3.0/dist/js/bootstrap.bundle.min.js"></script>
</body>
</html>
